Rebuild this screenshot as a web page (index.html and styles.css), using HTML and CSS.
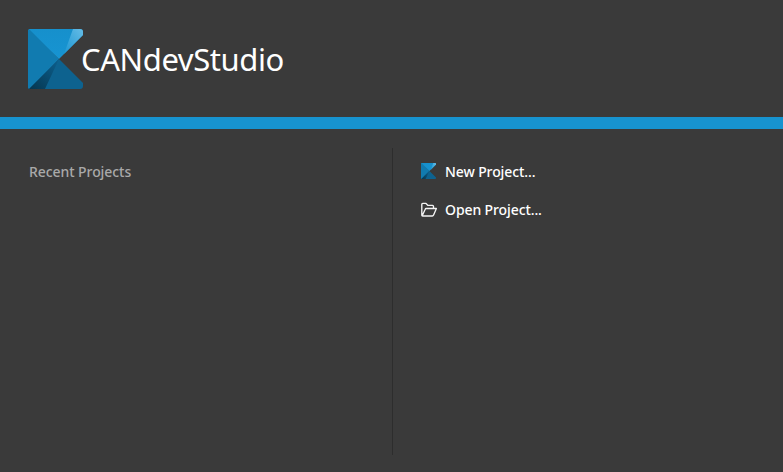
FILE: index.html
```html
<!DOCTYPE html>
<html lang="en">
<head>
<meta charset="utf-8">
<title>CANdevStudio</title>
<link rel="stylesheet" href="styles.css">
</head>
<body>
<svg width="0" height="0" class="defs">
  <defs>
    <linearGradient id="top" x1="0" y1="0" x2="0" y2="1"><stop offset="0" stop-color="#1690cc"/><stop offset="1" stop-color="#1794d2"/></linearGradient>
    <linearGradient id="shine" x1="1" y1="0" x2="0" y2="1"><stop offset="0" stop-color="#65bce6"/><stop offset="1" stop-color="#1c96d2"/></linearGradient>
    <linearGradient id="shade" x1="0" y1="1" x2="1" y2="0"><stop offset="0" stop-color="#06364f"/><stop offset="1" stop-color="#0c608f"/></linearGradient>
    <symbol id="logo" viewBox="0 0 55 60" preserveAspectRatio="none">
      <path fill="#117bb0" d="M1 0H3L31 30L3 60H1L0 59V1Z"/>
      <path fill="url(#top)" d="M1 0H52Q55 0 55 3V6L31 30Z"/>
      <path fill="url(#shine)" d="M45 0H52Q55 0 55 3V6L36 25Z"/>
      <path fill="#0d628f" d="M31 30L55 54V57Q55 60 52 60H1Z"/>
      <path fill="url(#shade)" d="M31 30L17 60H1Z"/>
    </symbol>
  </defs>
</svg>
<header class="header">
  <svg class="logo"><use href="#logo"/></svg>
  <h1 class="title">CANdevStudio</h1>
</header>
<div class="accent"></div>
<main class="content">
  <section class="recent"><h2 class="recent-title">Recent Projects</h2></section>
  <nav class="actions">
    <a class="action"><svg class="action-icon new-icon"><use href="#logo"/></svg><span>New Project...</span></a>
    <a class="action"><svg class="action-icon" viewBox="0 0 16 16" fill="none" stroke="#f4f4f4" stroke-width="1.35" stroke-linejoin="round"><path d="M.8 13.3V2.5Q.8 1.4 1.8 1.4H5L7 3.4H11.5Q12.5 3.4 12.5 4.4V6.5M1.2 13.7L4.2 7.2Q4.5 6.5 5.2 6.5H15.4L12.6 13.1Q12.2 14 11.3 14H1.6Q.8 14 .8 13.2"/></svg><span>Open Project...</span></a>
  </nav>
</main>
</body>
</html>
```
FILE: styles.css
```css
* { box-sizing: border-box; }
body {
  margin: 0;
  height: 472px;
  display: flex;
  flex-direction: column;
  overflow: hidden;
  background: #3a3a3a;
  color: #fff;
  font-family: "Noto Sans", "Open Sans", sans-serif;
}
.defs { position: absolute; }
.header {
  flex: 0 0 117px;
  display: flex;
  align-items: center;
  padding-left: 28px;
}
.logo { width: 55px; height: 60px; flex: none; }
.title {
  margin: 0 0 0 -2px;
  font-size: 31px;
  line-height: 40px;
  font-weight: 400;
  letter-spacing: -0.41px;
  white-space: nowrap;
}
.accent { flex: 0 0 12px; background: #1793cf; }
.content { flex: 1; display: flex; padding: 19px 0 17px; }
.recent { width: 393px; border-right: 1px solid #2d2d2d; padding: 14px 0 0 29px; }
.recent-title {
  margin: 0;
  font-size: 14px;
  line-height: 20px;
  font-weight: 500;
  letter-spacing: -0.07px;
  color: #a9a9a9;
}
.actions { display: flex; flex-direction: column; gap: 18px; padding: 14px 0 0 28px; }
.action {
  display: flex;
  align-items: center;
  gap: 8px;
  height: 20px;
  font-size: 14px;
  line-height: 20px;
  font-weight: 500;
  letter-spacing: -0.1px;
  white-space: nowrap;
}
.action-icon { width: 16px; height: 16px; }
.new-icon { width: 15px; margin: 0 1px 2px 0; }
```
